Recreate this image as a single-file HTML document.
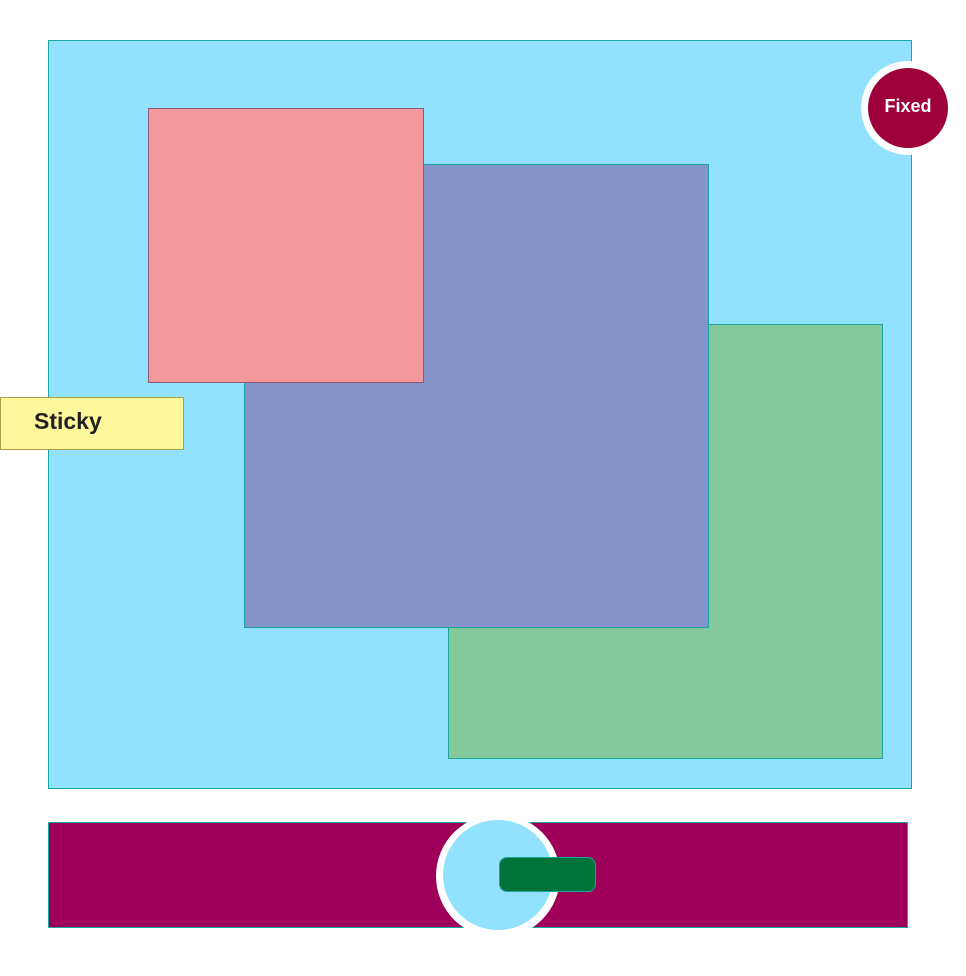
<!DOCTYPE html>
<html><head><style>
body{margin:0;width:966px;height:976px;background:#fff;position:relative;overflow:hidden;font-family:"Liberation Sans",sans-serif}
div{position:absolute;box-sizing:border-box}
</style></head><body>
<div style="left:48px;top:40px;width:864px;height:749px;background:#92e1fe;border:1px solid #1aa6a0"></div>
<div style="left:448px;top:324px;width:435px;height:435px;background:#83c99b;border:1px solid #1aa6a0"></div>
<div style="left:244px;top:164px;width:465px;height:464px;background:#8493c9;border:1px solid #1aa6a0"></div>
<div style="left:148px;top:108px;width:276px;height:275px;background:#f3989d;border:1px solid #8a5a78"></div>
<div style="left:0;top:397px;width:184px;height:53px;background:#fff79b;border:1px solid #b0a050;font-weight:bold;font-size:23px;line-height:47px;padding-left:33px;color:#222">Sticky</div>
<div style="left:861px;top:61px;width:94px;height:94px;border-radius:50%;background:#fff"></div>
<div style="left:868px;top:68px;width:80px;height:80px;border-radius:50%;background:#9e003a;color:#fff;font-weight:bold;font-size:18px;line-height:76px;text-align:center">Fixed</div>
<div style="left:48px;top:822px;width:860px;height:106px;background:#9e0059;border:1px solid #1aa6a0"></div>
<div style="left:436px;top:814px;width:124px;height:124px;border-radius:50%;background:#fff"></div>
<div style="left:443px;top:820px;width:110px;height:110px;border-radius:50%;background:#92e1fe"></div>
<div style="left:499px;top:857px;width:97px;height:35px;border-radius:8px;background:#007338;border:1px solid #1aa6a0"></div>
</body></html>
